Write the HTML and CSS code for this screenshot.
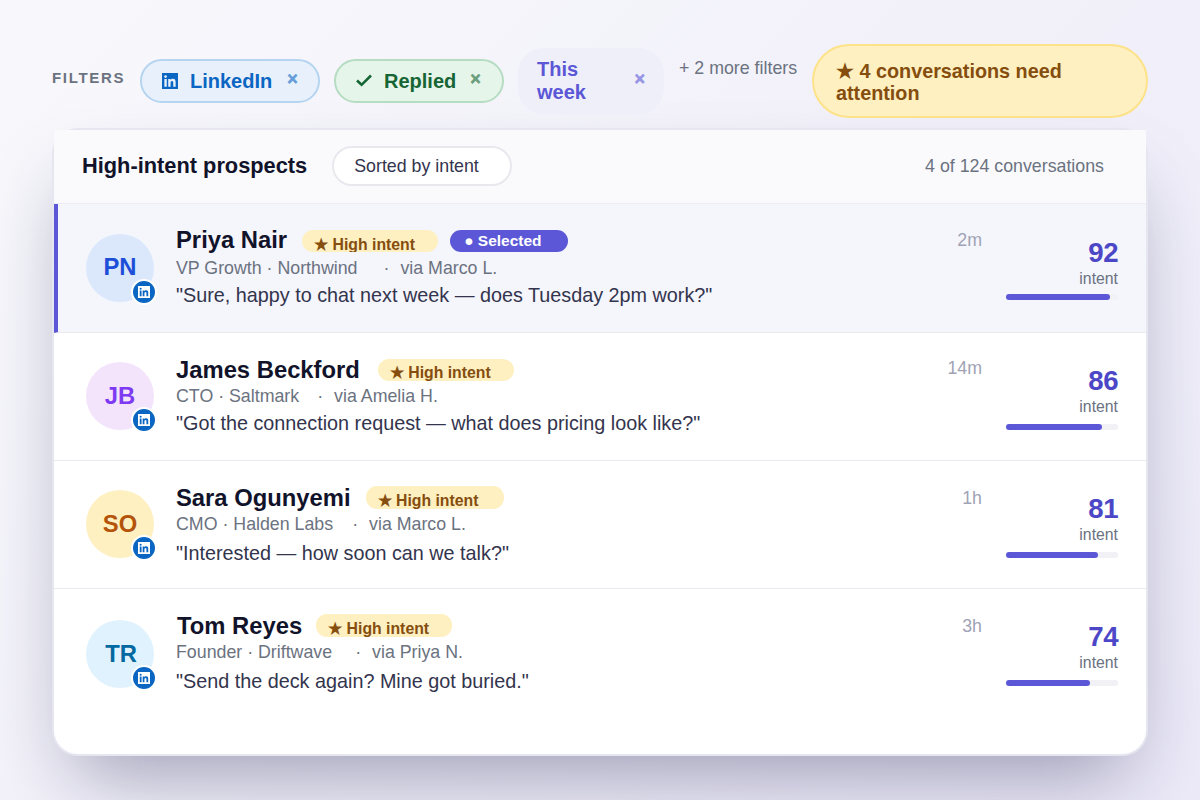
FILE: index.html
```html
<!DOCTYPE html>
<html>

<head>
    <title>High-intent prospects</title>
    <meta charset="utf-8">
    <meta name="viewport" content="width=device-width, initial-scale=1.0">
    <link rel="stylesheet" href="styles.css">
</head>

<body>
    <svg class="defs" width="0" height="0">
        <symbol id="li" viewBox="0 0 24 24">
            <path fill-rule="evenodd" d="M0 0h24v24H0zM20.45 20.45v-6.28c0-3.09-.67-5.46-4.27-5.46-1.73 0-2.89.95-3.37 1.85h-.05V9H9.35v11.45h3.55v-5.67c0-1.49.29-2.94 2.14-2.94 1.82 0 1.85 1.71 1.85 3.04v5.57zM5.34 7.43a2.06 2.06 0 1 0 0-4.13 2.06 2.06 0 0 0 0 4.13zM7.12 20.45V9H3.56v11.45z" />
        </symbol>
    </svg>

    <main class="stage">
        <nav class="filters">
            <span class="filters-label">FILTERS</span>
            <span class="chip chip-blue">
                <svg class="chip-icon"><use href="#li" /></svg>
                <span>LinkedIn</span>
                <span class="chip-x">×</span>
            </span>
            <span class="chip chip-green">
                <svg class="chip-icon" viewBox="0 0 16 16"><path d="M1 8.5l4.6 4.3L15 3.5" /></svg>
                <span>Replied</span>
                <span class="chip-x">×</span>
            </span>
            <span class="chip chip-purple">
                <span class="chip-text">This week</span>
                <span class="chip-x">×</span>
            </span>
            <span class="more">+ 2 more filters</span>
            <span class="attention">★ 4 conversations need attention</span>
        </nav>

        <section class="card">
            <header class="card-head">
                <h1>High-intent prospects</h1>
                <span class="sort">Sorted by intent</span>
                <span class="count">4 of 124 conversations</span>
            </header>

            <article class="row r1 selected">
                <div class="avatar av-blue">PN
                    <span class="li-badge"><svg><use href="#li" /></svg></span>
                </div>
                <div class="info">
                    <div class="top">
                        <h2>Priya Nair</h2>
                        <span class="tag">★ High intent</span>
                        <span class="tag-selected">● Selected</span>
                    </div>
                    <p class="sub">VP Growth · Northwind<span class="sep">·</span>via Marco L.</p>
                    <p class="quote">"Sure, happy to chat next week — does Tuesday 2pm work?"</p>
                </div>
                <span class="time">2m</span>
                <div class="score">
                    <b>92</b>
                    <span>intent</span>
                    <div class="bar"><i style="width: 93%"></i></div>
                </div>
            </article>

            <article class="row r2">
                <div class="avatar av-purple">JB
                    <span class="li-badge"><svg><use href="#li" /></svg></span>
                </div>
                <div class="info">
                    <div class="top">
                        <h2>James Beckford</h2>
                        <span class="tag">★ High intent</span>
                    </div>
                    <p class="sub">CTO · Saltmark<span class="sep">·</span>via Amelia H.</p>
                    <p class="quote">"Got the connection request — what does pricing look like?"</p>
                </div>
                <span class="time">14m</span>
                <div class="score">
                    <b>86</b>
                    <span>intent</span>
                    <div class="bar"><i style="width: 86%"></i></div>
                </div>
            </article>

            <article class="row r3">
                <div class="avatar av-yellow">SO
                    <span class="li-badge"><svg><use href="#li" /></svg></span>
                </div>
                <div class="info">
                    <div class="top">
                        <h2>Sara Ogunyemi</h2>
                        <span class="tag">★ High intent</span>
                    </div>
                    <p class="sub">CMO · Halden Labs<span class="sep">·</span>via Marco L.</p>
                    <p class="quote">"Interested — how soon can we talk?"</p>
                </div>
                <span class="time">1h</span>
                <div class="score">
                    <b>81</b>
                    <span>intent</span>
                    <div class="bar"><i style="width: 82%"></i></div>
                </div>
            </article>

            <article class="row r4">
                <div class="avatar av-sky">TR
                    <span class="li-badge"><svg><use href="#li" /></svg></span>
                </div>
                <div class="info">
                    <div class="top">
                        <h2>Tom Reyes</h2>
                        <span class="tag">★ High intent</span>
                    </div>
                    <p class="sub">Founder · Driftwave<span class="sep">·</span>via Priya N.</p>
                    <p class="quote">"Send the deck again? Mine got buried."</p>
                </div>
                <span class="time">3h</span>
                <div class="score">
                    <b>74</b>
                    <span>intent</span>
                    <div class="bar"><i style="width: 75%"></i></div>
                </div>
            </article>
        </section>
    </main>
</body>

</html>
```

FILE: styles.css
```css
* {
    box-sizing: border-box;
}

html,
body {
    height: 100%;
}

body {
    margin: 0;
    overflow: hidden;
    font-family: "Liberation Sans", Arial, sans-serif;
    background: linear-gradient(135deg, #f8f8fc, #eceaf8);
    color: #11132a;
}

.defs {
    position: absolute;
}

.stage {
    padding: 44px 52px 0;
}

/* filter bar */
.filters {
    display: flex;
    align-items: center;
    height: 74px;
}

.filters-label {
    width: 88px;
    font-size: 15px;
    font-weight: 700;
    letter-spacing: 1.7px;
    color: #6b7280;
    margin-bottom: 8px;
}

.chip {
    display: flex;
    flex: none;
    align-items: center;
    height: 44px;
    padding: 0 20px;
    margin-right: 14px;
    border: 2px solid;
    border-radius: 22px;
    font-size: 20px;
    font-weight: 700;
}

.chip-icon {
    width: 16px;
    height: 16px;
    margin-right: 12px;
    fill: currentColor;
}

.chip-x {
    margin-left: 15px;
    margin-top: -4px;
    font-size: 18px;
    opacity: .6;
    -webkit-text-stroke: .6px currentColor;
}

.chip-blue {
    width: 180px;
    background: #e8f1fb;
    border-color: #b5d4f0;
    color: #0a66c2;
}

.chip-green {
    width: 170px;
    background: #e6f5ea;
    border-color: #b6dcc2;
    color: #166534;
}

.chip-green .chip-icon {
    margin-top: -2px;
    fill: none;
    stroke: currentColor;
    stroke-width: 2.6;
}

.chip-green .chip-x {
    margin-left: 14px;
}

.chip-purple {
    width: 146px;
    height: 66px;
    border-radius: 26px;
    padding: 0 17px;
    background: #efeffa;
    border-color: #efeffa;
    color: #5b57d6;
}

.chip-text {
    width: 80px;
}

.chip-purple .chip-x {
    margin-left: 19px;
}

.more {
    flex: none;
    width: 118px;
    margin-left: 1px;
    margin-right: 15px;
    margin-bottom: 26px;
    font-size: 17.8px;
    white-space: nowrap;
    color: #6b7280;
}

.attention {
    flex: none;
    width: 336px;
    height: 74px;
    padding: 14px 22px;
    background: #fef0c0;
    border: 2px solid #fde28a;
    border-radius: 37px;
    font-size: 19.8px;
    line-height: 22px;
    font-weight: 700;
    color: #854d0e;
}

/* list card */
.card {
    height: 624px;
    margin: 12px 2px 0;
    background: #fff;
    border-radius: 24px;
    box-shadow: 0 0 0 2px #e6e6f0, 0 40px 80px -20px rgba(30, 27, 75, .4);
}

.card-head {
    display: flex;
    align-items: center;
    height: 74px;
    padding: 0 42px 2px 28px;
    background: #fafafc;
    border-bottom: 1px solid #ececf2;
}

.card-head h1 {
    margin: 0 25px 0 0;
    font-size: 21.8px;
    color: #11132a;
}

.sort {
    width: 180px;
    height: 40px;
    padding-left: 20px;
    line-height: 36px;
    font-size: 17.8px;
    color: #33344d;
    background: #fff;
    border: 2px solid #e8e8ef;
    border-radius: 20px;
}

.count {
    margin-left: auto;
    margin-top: 2px;
    font-size: 17.8px;
    color: #6b7280;
}

.row {
    display: flex;
    height: 128px;
    padding: 30px 28px 0 32px;
    background: #fff;
    border-bottom: 1px solid #e9e9ef;
}

.row:last-child {
    border-bottom: none;
}

.row.selected {
    height: 129px;
    padding-left: 28px;
    background: #f5f5fc;
    border-left: 4px solid #5b57d6;
}

.avatar {
    position: relative;
    flex: none;
    width: 68px;
    height: 68px;
    margin-top: -1px;
    border-radius: 50%;
    font-size: 23.8px;
    font-weight: 700;
    line-height: 68px;
    text-align: center;
}

.av-blue {
    background: #dbe8fc;
    color: #1d4ed8;
}

.av-purple {
    background: #f3e4fb;
    color: #7e3af2;
}

.av-yellow {
    background: #fef0c0;
    color: #b4530a;
}

.av-sky {
    background: #e0f2fe;
    color: #0369a1;
}

.li-badge {
    position: absolute;
    right: -3px;
    bottom: -3px;
    display: flex;
    align-items: center;
    justify-content: center;
    width: 26px;
    height: 26px;
    background: #0a66c2;
    border: 2px solid #fff;
    border-radius: 50%;
}

.li-badge svg {
    width: 12px;
    height: 12px;
    fill: #fff;
}

.info {
    flex: 1;
    margin-left: 22px;
    margin-top: -7px;
}

.top {
    display: flex;
    align-items: flex-start;
    gap: 15px;
}

.top h2 {
    margin: 0;
    font-size: 23.8px;
    line-height: 28px;
    font-weight: 700;
}

.tag,
.tag-selected {
    height: 22px;
    margin-top: 3px;
    border-radius: 11px;
    font-size: 15.8px;
    font-weight: 700;
}

.tag {
    width: 136px;
    padding-left: 12px;
    line-height: 28px;
    background: #fef0c0;
    color: #854d0e;
    overflow: hidden;
}

.tag-selected {
    width: 118px;
    margin-left: -3px;
    padding-left: 14px;
    line-height: 21px;
    font-size: 15.5px;
    background: #5b57d6;
    color: #fff;
}

.sub {
    margin: 0;
    font-size: 17.8px;
    line-height: 24px;
    color: #6b7280;
}

.sep {
    margin: 0 11px 0 17px;
}

.quote {
    margin: 3px 0 0;
    font-size: 19.8px;
    line-height: 24px;
    color: #33344d;
}

.time {
    margin-top: -6px;
    margin-right: 24px;
    font-size: 17.8px;
    line-height: 22px;
    color: #a0a3b5;
}

.score {
    flex: none;
    width: 112px;
    margin-top: 2px;
    text-align: right;
}

.score b {
    display: block;
    font-size: 27.6px;
    line-height: 32px;
    letter-spacing: -.5px;
    color: #4c47c6;
}

.score span {
    display: block;
    font-size: 15.8px;
    line-height: 20px;
    color: #6b7280;
}

.bar {
    height: 6px;
    margin-top: 7px;
    background: #f1f1f6;
    border-radius: 3px;
}

.bar i {
    display: block;
    height: 100%;
    background: #5b57d6;
    border-radius: 3px;
}

/* rows don't sit on quite the same lines */
.r1 .avatar {
    margin-top: 0;
    line-height: 66px;
}

.r1 .info {
    margin-top: -8px;
}

.r1 .tag,
.r1 .tag-selected {
    margin-top: 4px;
}

.r1 .tag {
    line-height: 29px;
}

.r1 .sub {
    margin-top: 2px;
}

.r1 .sep {
    margin-left: 26px;
}

.r1 .time {
    margin-top: -5px;
}

.r1 .score {
    margin-top: 3px;
}

.r1 .bar {
    margin-top: 5px;
}

.r2 .tag {
    margin-left: 3px;
    line-height: 27px;
}

.r2 .sep {
    margin-left: 18px;
}

.r3 .time,
.r4 .time {
    margin-top: -4px;
}

.r3 .quote,
.r4 .quote {
    margin-top: 5px;
}

.r3 .tag,
.r4 .tag {
    height: 23px;
    margin-top: 2px;
    line-height: 29px;
}

.r3 .tag {
    width: 138px;
}

.r3 .sep {
    margin-left: 19px;
}

.r4 .sep {
    margin-left: 23px;
}

.r4 .avatar {
    margin-top: 1px;
    text-indent: 2px;
}

.r4 .top h2 {
    margin-left: 1px;
    margin-right: -1px;
}
```
